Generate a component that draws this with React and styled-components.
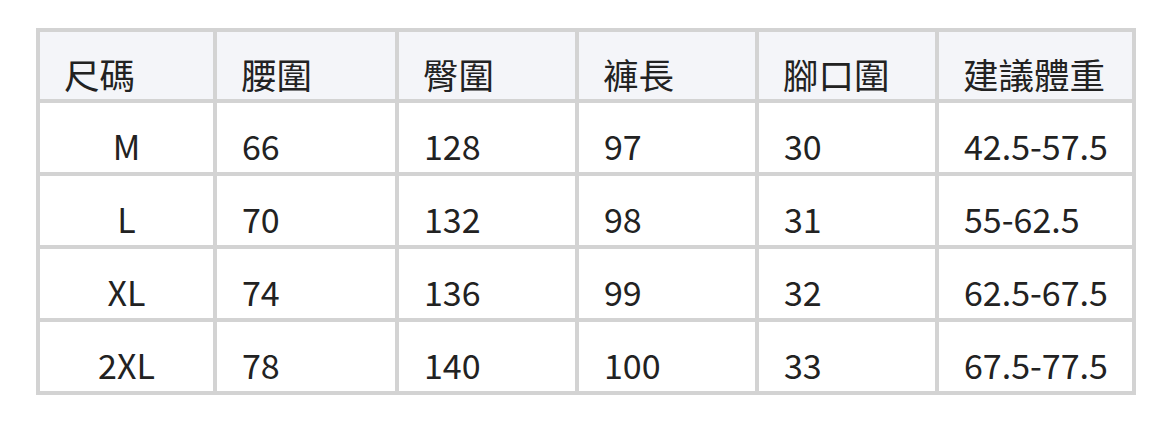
import React from 'react';
import styled, { createGlobalStyle } from 'styled-components';

const GlobalStyle = createGlobalStyle`
  body {
    margin: 0;
    background: #ffffff;
    font-family: "Noto Sans CJK TC", "Noto Sans", sans-serif;
    color: #222222;
  }
`;

const Page = styled.div`
  padding: 28px 0 0 36px;
`;

const SizeGrid = styled.div`
  display: grid;
  grid-template-columns: 173px 178px 176px 176px 176px 193px;
  grid-template-rows: 67px repeat(4, 69px);
  gap: 4px;
  padding: 4px;
  width: 1100px;
  box-sizing: border-box;
  background: #d3d3d3;
`;

const Cell = styled.div`
  display: flex;
  align-items: center;
  justify-content: ${(props) => (props.$center ? 'center' : 'flex-start')};
  padding: ${(props) => (props.$head ? '18px' : '17px')} 0 0
    ${(props) => (props.$center ? '0' : props.$head ? '24px' : '25px')};
  box-sizing: border-box;
  background: ${(props) => (props.$head ? '#f4f5f9' : '#ffffff')};
  font-size: ${(props) => (props.$head ? '35.5px' : '34px')};
  line-height: 1.2;
  white-space: nowrap;
`;

const headers = ['尺碼', '腰圍', '臀圍', '褲長', '腳口圍', '建議體重'];

const rows = [
  ['M', '66', '128', '97', '30', '42.5-57.5'],
  ['L', '70', '132', '98', '31', '55-62.5'],
  ['XL', '74', '136', '99', '32', '62.5-67.5'],
  ['2XL', '78', '140', '100', '33', '67.5-77.5'],
];

const App = () => (
  <Page>
    <GlobalStyle />
    <SizeGrid>
      {headers.map((h) => (
        <Cell $head key={h}>{h}</Cell>
      ))}
      {rows.map((row) =>
        row.map((value, i) => (
          <Cell $center={i === 0} key={`${row[0]}-${i}`}>
            {value}
          </Cell>
        ))
      )}
    </SizeGrid>
  </Page>
);

export default App;
